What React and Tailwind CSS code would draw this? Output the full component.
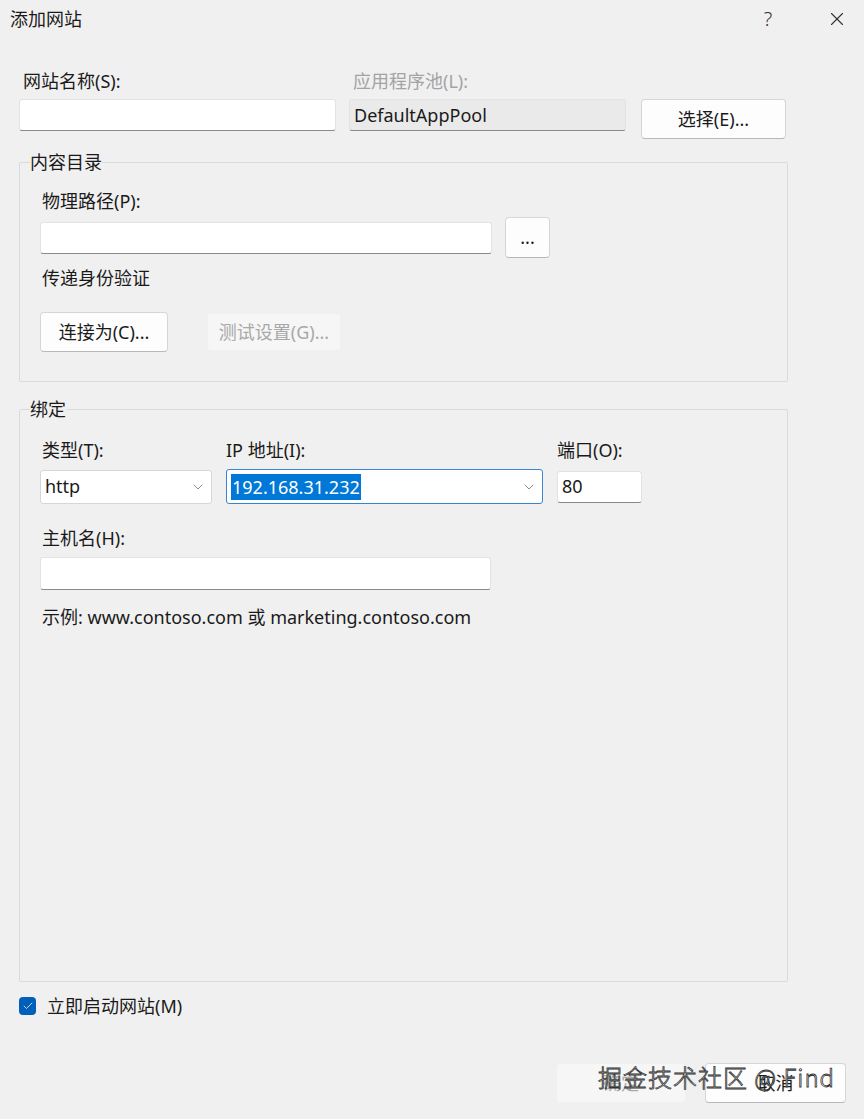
import React from 'react'
import { ChevronDown, X, Check } from 'lucide-react'

const font = "font-['Noto_Sans','Noto_Sans_CJK_SC',sans-serif]"

function TextBox({ value, className = '', disabled }) {
  return (
    <div
      className={`flex items-center px-[4px] border border-[#e3e3e3] border-b-[#8a8a8a] rounded-[3px] text-[18px] text-[#1a1a1a] ${
        disabled ? 'bg-[#eaeaea]' : 'bg-white'
      } ${className}`}
    >
      {value}
    </div>
  )
}

function Button({ children, className = '', disabled }) {
  return (
    <button
      type="button"
      className={`flex items-center justify-center rounded-[4px] text-[18px] ${
        disabled
          ? 'bg-[#f6f6f6] text-[#a8a8a8] border border-[#f0f0f0]'
          : 'bg-[#fdfdfd] text-[#1a1a1a] border border-[#d6d6d6] border-b-[#b8b8b8]'
      } ${className}`}
    >
      {children}
    </button>
  )
}

function Select({ children, className = '', active }) {
  return (
    <div
      className={`flex items-center justify-between bg-white rounded-[3px] pl-[4px] pr-[5px] text-[18px] text-[#1a1a1a] ${
        active ? 'border border-[#3b84d4]' : 'border border-[#d6d6d6]'
      } ${className}`}
    >
      {children}
      <ChevronDown className="w-[16px] h-[16px] text-[#555]" strokeWidth={1} />
    </div>
  )
}

function Label({ children, muted, className = '' }) {
  return (
    <div className={`h-[22px] leading-[22px] text-[18px] whitespace-nowrap ${muted ? 'text-[#a3a3a3]' : 'text-[#1a1a1a]'} ${className}`}>
      {children}
    </div>
  )
}

export default function App() {
  return (
    <div className={`relative w-[864px] h-[1119px] bg-[#f0f0f0] flex flex-col ${font}`}>
      {/* 标题栏 */}
      <div className="h-[38px] flex items-center justify-between pl-[10px]">
        <span className="text-[18px] text-[#1a1a1a]">添加网站</span>
        <div className="flex items-center h-full pr-[16px]">
          <span className="w-[24px] text-center text-[20px] font-light text-[#333] mr-[46px]">?</span>
          <X className="w-[22px] h-[22px] text-[#333]" strokeWidth={1.2} />
        </div>
      </div>

      <div className="px-[19px] pt-[32px] flex flex-col">
        {/* 网站名称 / 应用程序池 */}
        <div className="flex gap-[13px]">
          <div className="w-[317px] flex flex-col gap-[7px]">
            <Label className="pl-[4px]">网站名称(S):</Label>
            <TextBox className="h-[32px]" />
          </div>
          <div className="w-[277px] flex flex-col gap-[7px]">
            <Label muted className="pl-[4px]">应用程序池(L):</Label>
            <TextBox disabled className="h-[32px]" value="DefaultAppPool" />
          </div>
          <div className="flex flex-col pt-[29px] ml-[2px]">
            <Button className="w-[145px] h-[40px]">选择(E)...</Button>
          </div>
        </div>

        {/* 内容目录 */}
        <fieldset className="mt-[12px] w-[769px] border border-[#dadada] rounded-[2px] pl-[20px] pb-[29px]">
          <legend className="-ml-[10px] h-[22px] leading-[22px] text-[18px] text-[#1a1a1a]">内容目录</legend>
          <Label className="mt-[17px] pl-[2px]">物理路径(P):</Label>
          <div className="mt-[5px] flex items-center gap-[13px]">
            <TextBox className="w-[452px] h-[32px]" />
            <Button className="w-[45px] h-[41px]">...</Button>
          </div>
          <Label className="mt-[9px] pl-[2px]">传递身份验证</Label>
          <div className="mt-[23px] flex items-center gap-[39px]">
            <Button className="w-[128px] h-[40px]">连接为(C)...</Button>
            <Button disabled className="w-[134px] h-[38px]">测试设置(G)...</Button>
          </div>
        </fieldset>

        {/* 绑定 */}
        <fieldset className="mt-[16px] w-[769px] h-[584px] border border-[#dadada] rounded-[2px] pl-[20px]">
          <legend className="-ml-[10px] h-[22px] leading-[22px] text-[18px] text-[#1a1a1a]">绑定</legend>
          <div className="mt-[19px] grid grid-cols-[172px_317px_85px] gap-x-[14px] gap-y-[8px] items-center">
            <Label className="pl-[2px]">类型(T):</Label>
            <Label>IP 地址(I):</Label>
            <Label>端口(O):</Label>
            <Select className="h-[34px]">http</Select>
            <Select active className="h-[35px] pl-[2px]">
              <span className="bg-[#0078d7] text-white px-[1px] leading-[26px]">192.168.31.232</span>
            </Select>
            <TextBox className="h-[32px]" value="80" />
          </div>
          <Label className="mt-[23px] pl-[2px]">主机名(H):</Label>
          <TextBox className="mt-[8px] w-[451px] h-[33px]" />
          <Label className="mt-[16px] pl-[2px]">示例: www.contoso.com 或 marketing.contoso.com</Label>
        </fieldset>

        {/* 立即启动 */}
        <div className="mt-[13px] flex items-center gap-[11px]">
          <span className="w-[17px] h-[18px] rounded-[4px] bg-[#005fb8] flex items-center justify-center">
            <Check className="w-[12px] h-[12px] text-white" strokeWidth={1.5} />
          </span>
          <span className="leading-[22px] text-[18px] text-[#1a1a1a]">立即启动网站(M)</span>
        </div>

        {/* 底部按钮 */}
        <div className="mt-[46px] flex justify-end gap-[19px] -mr-[1px]">
          <Button disabled className="w-[130px] h-[40px]">确定</Button>
          <Button className="w-[141px] h-[40px]">取消</Button>
        </div>
      </div>

      {/* 水印 */}
      <div className="absolute left-[598px] top-[1061px] text-[24px] leading-[32px] font-light text-white/90 tracking-[1px] [-webkit-text-stroke:0.8px_#333] font-['Noto_Sans_CJK_SC','DejaVu_Sans',sans-serif]">
        掘金技术社区 @ Find
      </div>
    </div>
  )
}
